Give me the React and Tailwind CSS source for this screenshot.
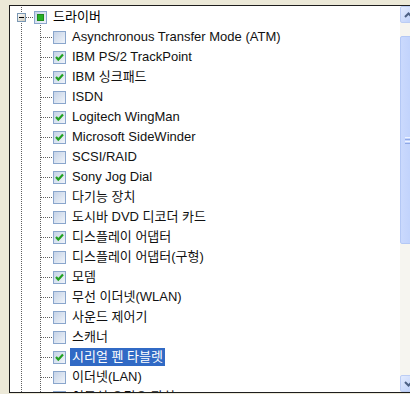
import React from "react";

const drivers = [
  { name: "Asynchronous Transfer Mode (ATM)", on: false },
  { name: "IBM PS/2 TrackPoint", on: true },
  { name: "IBM 싱크패드", on: true },
  { name: "ISDN", on: false },
  { name: "Logitech WingMan", on: true },
  { name: "Microsoft SideWinder", on: true },
  { name: "SCSI/RAID", on: false },
  { name: "Sony Jog Dial", on: true },
  { name: "다기능 장치", on: false },
  { name: "도시바 DVD 디코더 카드", on: false },
  { name: "디스플레이 어댑터", on: true },
  { name: "디스플레이 어댑터(구형)", on: false },
  { name: "모뎀", on: true },
  { name: "무선 이더넷(WLAN)", on: false },
  { name: "사운드 제어기", on: false },
  { name: "스캐너", on: false },
  { name: "시리얼 펜 타블렛", on: true, selected: true },
  { name: "이더넷(LAN)", on: false },
  { name: "이동식 오디오 장치", on: false },
];

const LINE = "#5f5f5f";

// XP style tri-state checkbox, 13x13
function CheckBox({ x, state, gid }) {
  return (
    <g transform={`translate(${x} 4)`}>
      <defs>
        <linearGradient id={gid} x1="0" y1="0" x2="1" y2="1">
          <stop offset="0" stopColor="#c3d1e6" />
          <stop offset="1" stopColor="#f2f5fa" />
        </linearGradient>
      </defs>
      <rect x="0.5" y="0.5" width="12" height="12" fill={`url(#${gid})`} stroke="#8aa6cc" />
      {state === "on" && (
        <polyline points="3,6 5.3,8.6 10,3.6" fill="none" stroke="#21a121" strokeWidth="2.2" />
      )}
      {state === "mixed" && (
        <rect x="3.5" y="3.5" width="6" height="6" fill="#25b025" stroke="#1c8a1c" />
      )}
    </g>
  );
}

function RootRow() {
  return (
    <div className="flex h-5 items-center">
      <svg width="41" height="20" className="shrink-0">
        <line x1="11.5" y1="0" x2="11.5" y2="20" stroke={LINE} strokeDasharray="1 1" />
        <line x1="16" y1="10.5" x2="24" y2="10.5" stroke={LINE} strokeDasharray="1 1" />
        <line x1="30.5" y1="18" x2="30.5" y2="20" stroke={LINE} strokeDasharray="1 1" />
        <defs>
          <linearGradient id="exp" x1="0" y1="0" x2="1" y2="1">
            <stop offset="0" stopColor="#ffffff" />
            <stop offset="1" stopColor="#c9c6b8" />
          </linearGradient>
        </defs>
        <rect x="7.5" y="6.5" width="8" height="8" fill="url(#exp)" stroke="#7a98b4" />
        <rect x="9" y="10" width="5" height="1" fill="#000" />
        <CheckBox x={24} state="mixed" gid="cb-root" />
      </svg>
      <span className="px-[2px] leading-[18px]">드라이버</span>
    </div>
  );
}

function DriverRow({ item, idx }) {
  return (
    <div className="flex h-5 items-center">
      <svg width="60" height="20" className="shrink-0">
        <line x1="11.5" y1="0" x2="11.5" y2="20" stroke={LINE} strokeDasharray="1 1" />
        <line x1="30.5" y1="0" x2="30.5" y2="20" stroke={LINE} strokeDasharray="1 1" />
        <line x1="31" y1="10.5" x2="43" y2="10.5" stroke={LINE} strokeDasharray="1 1" />
        <CheckBox x={43} state={item.on ? "on" : "off"} gid={`cb-${idx}`} />
      </svg>
      <span
        className={`whitespace-nowrap px-[2px] leading-[18px] ${
          item.selected ? "bg-[#316ac5] text-white" : "text-[#111]"
        }`}
      >
        {item.name}
      </span>
    </div>
  );
}

function Scrollbar() {
  return (
    <div className="flex w-[17px] shrink-0 flex-col bg-[#f6f5f0]">
      <div className="flex h-[17px] items-center justify-center rounded-[2px] border border-[#bccdf4] bg-gradient-to-br from-[#e3ebfe] to-[#b9cdf9]">
        <svg width="9" height="6" viewBox="0 0 9 6">
          <polyline points="1,5 4.5,1.5 8,5" fill="none" stroke="#4d6185" strokeWidth="2" />
        </svg>
      </div>
      <div className="h-[13px]" />
      <div className="flex h-[208px] flex-col items-center justify-center gap-px rounded-[2px] border border-[#b4c8f5] bg-gradient-to-r from-[#cad9fd] to-[#bccffb]">
        <div className="h-px w-2 bg-[#eef3ff]" />
        <div className="h-px w-2 bg-[#8fa8e6]" />
        <div className="h-px w-2 bg-[#eef3ff]" />
        <div className="h-px w-2 bg-[#8fa8e6]" />
      </div>
      <div className="flex-1" />
      <div className="flex h-[17px] items-center justify-center rounded-[2px] border border-[#bccdf4] bg-gradient-to-br from-[#e3ebfe] to-[#b9cdf9]">
        <svg width="9" height="6" viewBox="0 0 9 6">
          <polyline points="1,1 4.5,4.5 8,1" fill="none" stroke="#4d6185" strokeWidth="2" />
        </svg>
      </div>
    </div>
  );
}

export default function App() {
  return (
    <div className="h-[394px] w-[410px] overflow-hidden bg-[#ece9d8] pl-[9px] pt-[5px]">
      <div
        className="flex h-[388px] w-[420px] border border-[#1e1e1e] bg-white text-[13px] text-black"
        style={{ fontFamily: '"Liberation Sans", "Noto Sans CJK KR", sans-serif' }}
      >
        <div className="w-[390px] shrink-0 overflow-hidden pt-px">
          <RootRow />
          {drivers.map((d, i) => (
            <DriverRow key={d.name} item={d} idx={i} />
          ))}
        </div>
        <Scrollbar />
      </div>
    </div>
  );
}
